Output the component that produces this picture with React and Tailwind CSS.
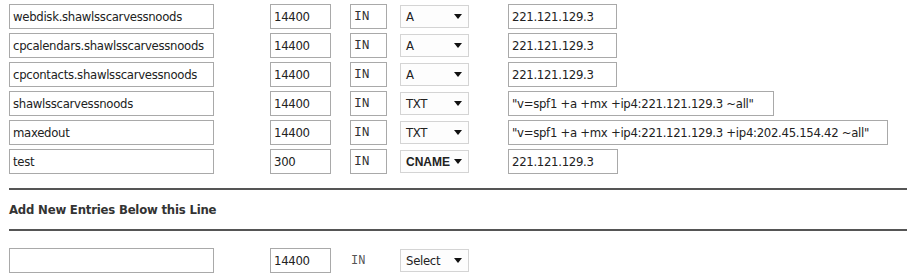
import React from "react";

const records = [
  { name: "webdisk.shawlsscarvessnoods", ttl: "14400", type: "A", value: "221.121.129.3", valueW: "w-[109px]" },
  { name: "cpcalendars.shawlsscarvessnoods", ttl: "14400", type: "A", value: "221.121.129.3", valueW: "w-[109px]" },
  { name: "cpcontacts.shawlsscarvessnoods", ttl: "14400", type: "A", value: "221.121.129.3", valueW: "w-[109px]" },
  { name: "shawlsscarvessnoods", ttl: "14400", type: "TXT", value: '"v=spf1 +a +mx +ip4:221.121.129.3 ~all"', valueW: "w-[266px]" },
  { name: "maxedout", ttl: "14400", type: "TXT", value: '"v=spf1 +a +mx +ip4:221.121.129.3 +ip4:202.45.154.42 ~all"', valueW: "w-[380px]" },
  { name: "test", ttl: "300", type: "CNAME", value: "221.121.129.3", valueW: "w-[110px]" },
];

const Field = ({ className = "", children }) => (
  <div
    className={`h-[25px] border border-[#a9a9a9] bg-white px-[3px] flex items-center text-[13px] text-[#222] whitespace-nowrap overflow-hidden ${className}`}
  >
    {children}
  </div>
);

const Caret = () => (
  <svg width="8" height="5" viewBox="0 0 8 5" className="ml-auto">
    <path d="M0 0 L8 0 L4 5 Z" fill="#111" />
  </svg>
);

const TypeSelect = ({ label, small, className = "" }) => (
  <div
    className={`h-[23px] w-[69px] border border-[#d4d4d4] bg-[#fdfdfd] pl-[5px] pr-[6px] flex items-center text-[#222] ${className}`}
  >
    <span className={small ? "text-[12px] font-['Liberation_Sans',sans-serif] font-semibold tracking-normal" : "text-[13px]"}>
      {label}
    </span>
    <Caret />
  </div>
);

const App = () => {
  return (
    <div className="w-[907px] h-[279px] bg-white overflow-hidden font-['DejaVu_Sans',sans-serif] font-stretch-condensed tracking-[-0.3px] pt-[4px]">
      <div className="pl-[9px] flex flex-col gap-[4px]">
        {records.map((r) => (
          <div key={r.name} className="flex items-center">
            <Field className="w-[205px]">{r.name}</Field>
            <Field className="w-[61px] ml-[56px]">{r.ttl}</Field>
            <Field className="w-[37px] ml-[19px] font-['Liberation_Mono',monospace] text-[12px] tracking-normal text-[#333]">IN</Field>
            <TypeSelect label={r.type} small={r.type === "CNAME"} className="ml-[13px]" />
            <Field className={`${r.valueW} ml-[39px]`}>{r.value}</Field>
          </div>
        ))}
      </div>

      <div className="ml-[9px] mt-[14px] border-t-[2px] border-[#555]" />
      <div className="ml-[9px] h-[39px] flex items-center text-[13px] font-bold text-[#333] tracking-[-0.2px]">
        Add New Entries Below this Line
      </div>
      <div className="ml-[9px] border-t-[2px] border-[#555]" />

      <div className="pl-[9px] mt-[17px] flex items-center">
        <Field className="w-[205px]" />
        <Field className="w-[61px] ml-[56px]">14400</Field>
        <div className="w-[37px] ml-[19px] pl-[1px] font-['Liberation_Mono',monospace] text-[12px] tracking-normal text-[#555]">IN</div>
        <TypeSelect label="Select" className="ml-[13px]" />
      </div>
    </div>
  );
};

export default App;
